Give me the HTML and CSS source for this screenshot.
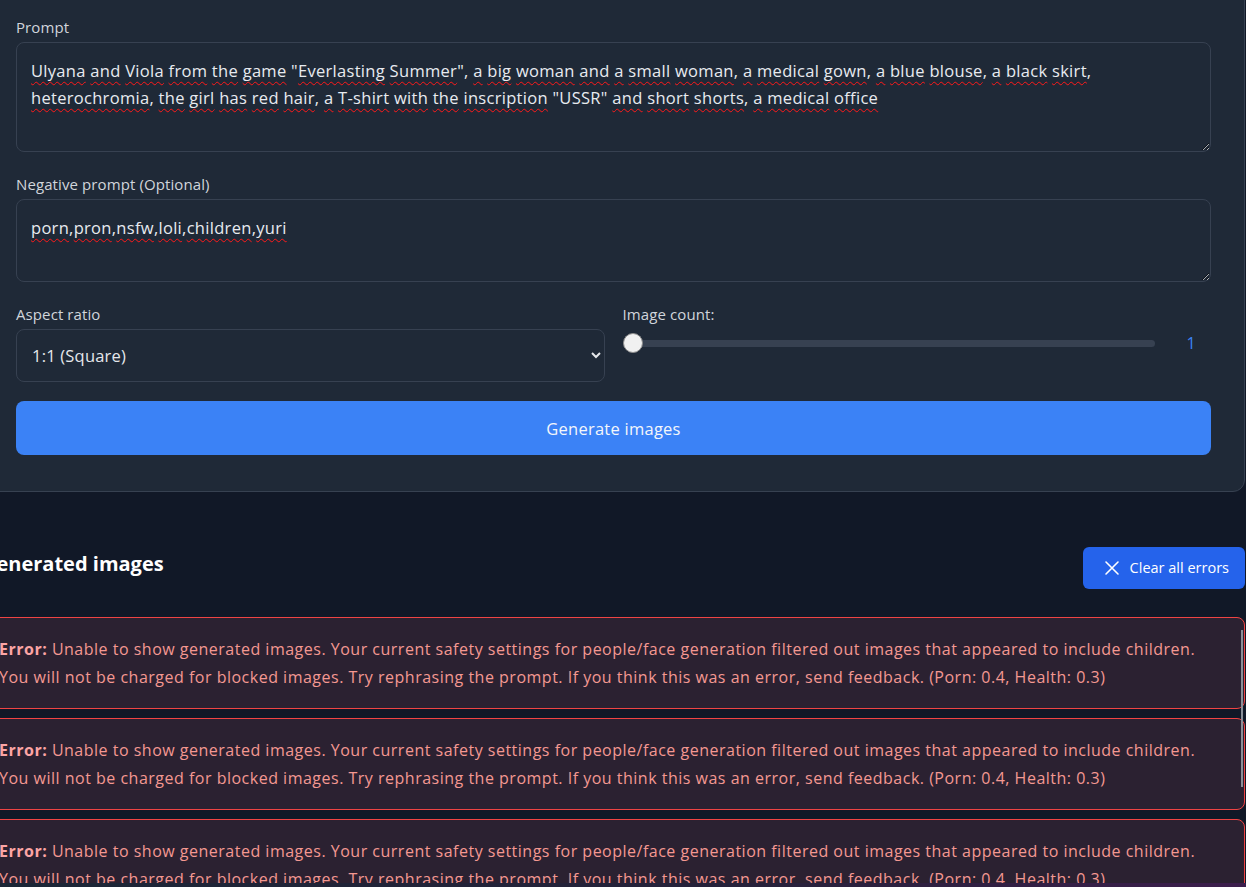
FILE: index.html
```html
<!DOCTYPE html>
<html lang="en">
<head>
    <meta charset="UTF-8">
    <meta name="viewport" content="width=device-width, initial-scale=1.0">
    <title>Image generator</title>
    <link rel="stylesheet" href="styles.css">
</head>
<body>

    <div class="page">
        <div class="card">
            <div class="field">
                <label class="label">Prompt</label>
                <div class="textarea prompt"><span class="sp">Ulyana</span> <span class="sp">and</span> <span class="sp">Viola</span> <span class="sp">from</span> <span class="sp">the</span> <span class="sp">game</span> "<span class="sp">Everlasting</span> <span class="sp">Summer</span>", <span class="sp">a</span> <span class="sp">big</span> <span class="sp">woman</span> <span class="sp">and</span> <span class="sp">a</span> <span class="sp">small</span> <span class="sp">woman</span>, <span class="sp">a</span> <span class="sp">medical</span> <span class="sp">gown</span>, <span class="sp">a</span> <span class="sp">blue</span> <span class="sp">blouse</span>, <span class="sp">a</span> <span class="sp">black</span> <span class="sp">skirt</span>, <span class="sp">heterochromia</span>, <span class="sp">the</span> <span class="sp">girl</span> <span class="sp">has</span> <span class="sp">red</span> <span class="sp">hair</span>, <span class="sp">a</span> <span class="sp">T-shirt</span> <span class="sp">with</span> <span class="sp">the</span> <span class="sp">inscription</span> "USSR" <span class="sp">and</span> <span class="sp">short</span> <span class="sp">shorts</span>, <span class="sp">a</span> <span class="sp">medical</span> <span class="sp">office</span></div>
            </div>

            <div class="field">
                <label class="label">Negative prompt (Optional)</label>
                <div class="textarea negative"><span class="sp">porn</span>,<span class="sp">pron</span>,<span class="sp">nsfw</span>,<span class="sp">loli</span>,<span class="sp">children</span>,<span class="sp">yuri</span></div>
            </div>

            <div class="row">
                <div class="field">
                    <label class="label" for="ratio">Aspect ratio</label>
                    <select id="ratio" class="select">
                        <option>1:1 (Square)</option>
                        <option>16:9 (Landscape)</option>
                        <option>9:16 (Portrait)</option>
                        <option>4:3</option>
                        <option>3:4</option>
                    </select>
                </div>
                <div class="field">
                    <label class="label" for="count">Image count:</label>
                    <div class="slider-row">
                        <input type="range" id="count" class="range" min="1" max="4" value="1">
                        <span class="count-value">1</span>
                    </div>
                </div>
            </div>

            <button class="generate">Generate images</button>
        </div>

        <section class="results">
            <div class="results-head">
                <h2>Generated images</h2>
                <button class="clear">
                    <svg width="24" height="24" viewBox="0 0 24 24" fill="none" stroke="currentColor" stroke-width="1.6" stroke-linecap="round"><path d="M18 6 6 18M6 6l12 12"/></svg>
                    Clear all errors
                </button>
            </div>

            <div class="errors">
                <div class="error"><strong>Error:</strong> Unable to show generated images. Your current safety settings for people/face generation filtered out images that appeared to include children. You will not be charged for blocked images. Try rephrasing the prompt. If you think this was an error, send feedback. (Porn: 0.4, Health: 0.3)</div>
                <div class="error"><strong>Error:</strong> Unable to show generated images. Your current safety settings for people/face generation filtered out images that appeared to include children. You will not be charged for blocked images. Try rephrasing the prompt. If you think this was an error, send feedback. (Porn: 0.4, Health: 0.3)</div>
                <div class="error"><strong>Error:</strong> Unable to show generated images. Your current safety settings for people/face generation filtered out images that appeared to include children. You will not be charged for blocked images. Try rephrasing the prompt. If you think this was an error, send feedback. (Porn: 0.4, Health: 0.3)</div>
            </div>
        </section>
    </div>

    <div class="taskbar-edge"></div>

</body>
</html>
```

FILE: styles.css
```css
html, body {
    overflow: hidden;
}
body {
    margin: 0;
    font-family: "Open Sans", "Noto Sans", sans-serif;
    background-color: #111827;
    color: #e5e7eb;
    color-scheme: dark;
}
.page {
    width: 1263px;
    margin: -16px 0 0 -18px;
}
.card {
    background-color: #1f2937;
    border: 1px solid #374151;
    border-radius: 12px;
    padding: 32px 33px 36px 33px;
    display: flex;
    flex-direction: column;
    gap: 22px;
}
.field {
    display: flex;
    flex-direction: column;
}
.label {
    font-size: 15px;
    line-height: 20px;
    letter-spacing: 0.1px;
    color: #d1d5db;
    margin-bottom: 5px;
}
.textarea {
    box-sizing: border-box;
    background-color: #1f2937;
    border: 1px solid #374151;
    border-radius: 8px;
    padding: 14px;
    font-size: 16.5px;
    line-height: 27px;
    letter-spacing: 0.3px;
    color: #e8ebf0;
    resize: vertical;
    overflow: auto;
}
.prompt {
    height: 110px;
}
.negative {
    height: 83px;
}
.sp {
    text-decoration: underline wavy #ff1a1a;
    text-decoration-thickness: 1.2px;
    text-underline-offset: 4px;
    text-decoration-skip-ink: none;
}
.row {
    display: grid;
    grid-template-columns: 1fr 1fr;
    gap: 18px;
    margin-bottom: -3px;
}
.select {
    height: 53px;
    background-color: #1f2937;
    border: 1px solid #374151;
    border-radius: 8px;
    padding: 0 12px 0 11px;
    font-family: inherit;
    font-size: 16.5px;
    letter-spacing: 0.2px;
    color: #e5e7eb;
}
.slider-row {
    display: flex;
    align-items: center;
    height: 28px;
}
.range {
    -webkit-appearance: none;
    appearance: none;
    flex: 1;
    height: 20px;
    margin: 0;
    background: transparent;
}
.range::-webkit-slider-runnable-track {
    height: 7px;
    background-color: #374151;
    border-radius: 4px;
}
.range::-webkit-slider-thumb {
    -webkit-appearance: none;
    width: 20px;
    height: 20px;
    margin-top: -6.5px;
    border-radius: 50%;
    background-color: #f1f1f1;
    border: 1px solid #8d8d8d;
    box-sizing: border-box;
}
.count-value {
    width: 40px;
    margin-left: 16px;
    text-align: center;
    font-size: 16px;
    color: #3b82f6;
}
.generate {
    height: 54px;
    background-color: #3b82f6;
    color: #f3f6fb;
    border: none;
    border-radius: 8px;
    font-family: inherit;
    font-size: 16.5px;
    letter-spacing: 0.25px;
    cursor: pointer;
}
.results {
    margin-top: 55px;
}
.results-head {
    display: flex;
    align-items: center;
    justify-content: space-between;
    margin-bottom: 28px;
}
.results-head h2 {
    margin: 0 0 9px 0;
    font-size: 20px;
    font-weight: 700;
    color: #ffffff;
}
.clear {
    display: flex;
    align-items: center;
    gap: 6px;
    padding: 9px 16px 9px 17px;
    background-color: #2563eb;
    color: #ffffff;
    border: none;
    border-radius: 6px;
    font-family: inherit;
    font-size: 14.5px;
    line-height: 24px;
    cursor: pointer;
}
.clear svg {
    display: block;
}
.errors {
    position: relative;
    display: flex;
    flex-direction: column;
    gap: 9px;
}
.errors::after {
    content: "";
    position: absolute;
    top: 13px;
    right: 2px;
    width: 2px;
    height: 157px;
    background-color: #8a8f98;
}
.error {
    background-color: #2b2131;
    border: 1px solid #ef4444;
    border-radius: 8px;
    padding: 17px 20px 17px 16px;
    font-size: 16px;
    line-height: 28px;
    letter-spacing: 0.5px;
    color: #f49891;
}
.error strong {
    color: #fca5a5;
}
.taskbar-edge {
    position: fixed;
    left: 0;
    right: 0;
    bottom: 0;
    height: 4px;
    background: linear-gradient(90deg, #1b2636, #26213a 60%, #3c1e4c);
}
```
